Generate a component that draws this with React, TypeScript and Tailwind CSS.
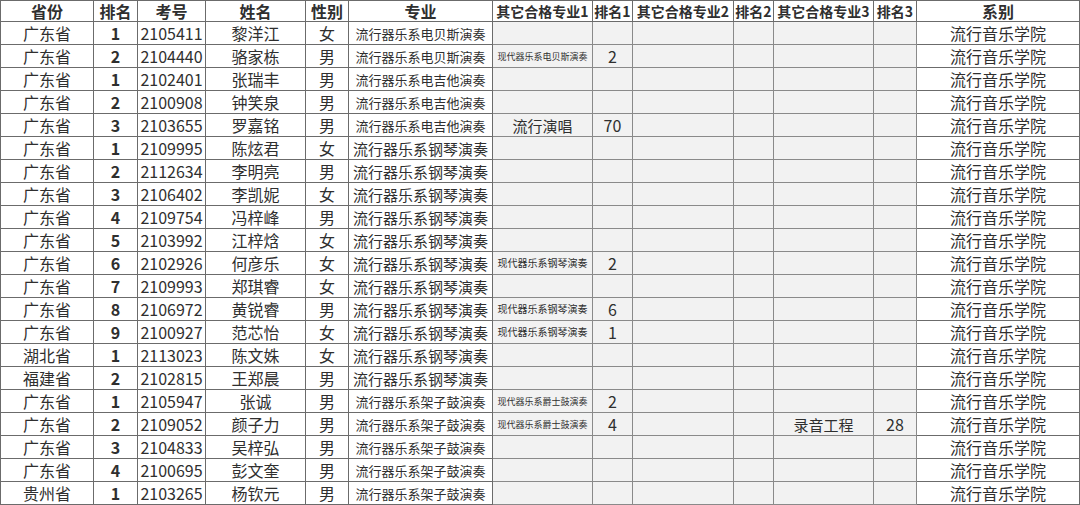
import React from "react";

type Row = {
  prov: string;
  rank: string;
  id: string;
  name: string;
  sex: string;
  major: string;
  majorSize: "sm" | "md";
  alt1?: string;
  alt1Size?: "xs" | "sm" | "lg";
  r1?: string;
  alt3?: string;
  r3?: string;
};

const BASS = "流行器乐系电贝斯演奏";
const GUITAR = "流行器乐系电吉他演奏";
const PIANO = "流行器乐系钢琴演奏";
const DRUM = "流行器乐系架子鼓演奏";

const rows: Row[] = [
  { prov: "广东省", rank: "1", id: "2105411", name: "黎洋江", sex: "女", major: BASS, majorSize: "sm" },
  { prov: "广东省", rank: "2", id: "2104440", name: "骆家栋", sex: "男", major: BASS, majorSize: "sm", alt1: "现代器乐系电贝斯演奏", alt1Size: "xs", r1: "2" },
  { prov: "广东省", rank: "1", id: "2102401", name: "张瑞丰", sex: "男", major: GUITAR, majorSize: "sm" },
  { prov: "广东省", rank: "2", id: "2100908", name: "钟笑泉", sex: "男", major: GUITAR, majorSize: "sm" },
  { prov: "广东省", rank: "3", id: "2103655", name: "罗嘉铭", sex: "男", major: GUITAR, majorSize: "sm", alt1: "流行演唱", alt1Size: "lg", r1: "70" },
  { prov: "广东省", rank: "1", id: "2109995", name: "陈炫君", sex: "女", major: PIANO, majorSize: "md" },
  { prov: "广东省", rank: "2", id: "2112634", name: "李明亮", sex: "男", major: PIANO, majorSize: "md" },
  { prov: "广东省", rank: "3", id: "2106402", name: "李凯妮", sex: "女", major: PIANO, majorSize: "md" },
  { prov: "广东省", rank: "4", id: "2109754", name: "冯梓峰", sex: "男", major: PIANO, majorSize: "md" },
  { prov: "广东省", rank: "5", id: "2103992", name: "江梓焓", sex: "女", major: PIANO, majorSize: "md" },
  { prov: "广东省", rank: "6", id: "2102926", name: "何彦乐", sex: "女", major: PIANO, majorSize: "md", alt1: "现代器乐系钢琴演奏", alt1Size: "sm", r1: "2" },
  { prov: "广东省", rank: "7", id: "2109993", name: "郑琪睿", sex: "女", major: PIANO, majorSize: "md" },
  { prov: "广东省", rank: "8", id: "2106972", name: "黄锐睿", sex: "男", major: PIANO, majorSize: "md", alt1: "现代器乐系钢琴演奏", alt1Size: "sm", r1: "6" },
  { prov: "广东省", rank: "9", id: "2100927", name: "范芯怡", sex: "女", major: PIANO, majorSize: "md", alt1: "现代器乐系钢琴演奏", alt1Size: "sm", r1: "1" },
  { prov: "湖北省", rank: "1", id: "2113023", name: "陈文姝", sex: "女", major: PIANO, majorSize: "md" },
  { prov: "福建省", rank: "2", id: "2102815", name: "王郑晨", sex: "男", major: PIANO, majorSize: "md" },
  { prov: "广东省", rank: "1", id: "2105947", name: "张诚", sex: "男", major: DRUM, majorSize: "sm", alt1: "现代器乐系爵士鼓演奏", alt1Size: "xs", r1: "2" },
  { prov: "广东省", rank: "2", id: "2109052", name: "颜子力", sex: "男", major: DRUM, majorSize: "sm", alt1: "现代器乐系爵士鼓演奏", alt1Size: "xs", r1: "4", alt3: "录音工程", r3: "28" },
  { prov: "广东省", rank: "3", id: "2104833", name: "吴梓弘", sex: "男", major: DRUM, majorSize: "sm" },
  { prov: "广东省", rank: "4", id: "2100695", name: "彭文奎", sex: "男", major: DRUM, majorSize: "sm" },
  { prov: "贵州省", rank: "1", id: "2103265", name: "杨钦元", sex: "男", major: DRUM, majorSize: "sm" },
];

const widths = [93, 44, 68, 100, 43, 144, 100, 40, 101, 40, 100, 43, 163];

const main = "border border-[#6b6b6b] h-[23px] p-0 text-center align-middle whitespace-nowrap";
const gray = "border border-[#8a8a8a] bg-[#f2f2f2] h-[23px] p-0 text-center align-middle whitespace-nowrap";
const head = "border border-[#6b6b6b] h-[21px] p-0 text-center align-middle whitespace-nowrap";

const altSize = { xs: "text-[9px]", sm: "text-[10px]", lg: "text-[15px]" };

export default function App() {
  return (
    <div
      className="w-[1080px] h-[505px] overflow-hidden bg-white text-[#2f2f2f]"
      style={{ fontFamily: '"Noto Sans CJK SC", "Noto Sans", sans-serif' }}
    >
      <table className="border-collapse table-fixed w-[1079px] leading-none">
        <colgroup>
          {widths.map((w, i) => (
            <col key={i} style={{ width: w }} />
          ))}
        </colgroup>
        <thead>
          <tr className="font-bold">
            <th className={`${head} text-[16px]`}>省份</th>
            <th className={`${head} text-[16px]`}>排名</th>
            <th className={`${head} text-[16px]`}>考号</th>
            <th className={`${head} text-[16px]`}>姓名</th>
            <th className={`${head} text-[16px]`}>性别</th>
            <th className={`${head} text-[16px]`}>专业</th>
            <th className={`${head} text-[14px]`}>其它合格专业1</th>
            <th className={`${head} text-[14px]`}>排名1</th>
            <th className={`${head} text-[14px]`}>其它合格专业2</th>
            <th className={`${head} text-[14px]`}>排名2</th>
            <th className={`${head} text-[14px]`}>其它合格专业3</th>
            <th className={`${head} text-[14px]`}>排名3</th>
            <th className={`${head} text-[16px]`}>系别</th>
          </tr>
        </thead>
        <tbody>
          {rows.map((r, i) => (
            <tr key={i}>
              <td className={`${main} text-[16px]`}>{r.prov}</td>
              <td className={`${main} text-[16px] font-bold`}>{r.rank}</td>
              <td className={`${main} text-[16px]`}>{r.id}</td>
              <td className={`${main} text-[16px]`}>{r.name}</td>
              <td className={`${main} text-[16px]`}>{r.sex}</td>
              <td className={`${main} ${r.majorSize === "md" ? "text-[15px]" : "text-[13px]"}`}>{r.major}</td>
              <td className={`${gray} ${r.alt1Size ? altSize[r.alt1Size] : ""}`}>{r.alt1 ?? ""}</td>
              <td className={`${gray} text-[16px]`}>{r.r1 ?? ""}</td>
              <td className={gray}></td>
              <td className={gray}></td>
              <td className={`${gray} text-[15px]`}>{r.alt3 ?? ""}</td>
              <td className={`${gray} text-[16px]`}>{r.r3 ?? ""}</td>
              <td className={`${main} text-[16px]`}>流行音乐学院</td>
            </tr>
          ))}
        </tbody>
      </table>
    </div>
  );
}
